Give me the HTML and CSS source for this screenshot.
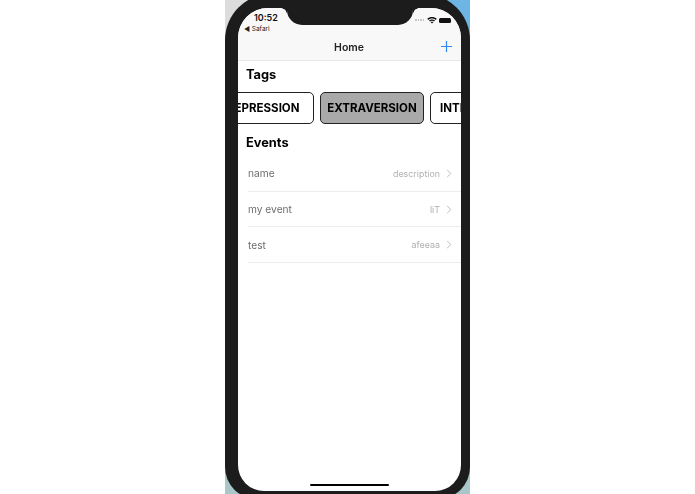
FILE: index.html
```html
<!DOCTYPE html>
<html lang="en">
<head>
<meta charset="utf-8">
<title>Home</title>
<link rel="stylesheet" href="styles.css">
</head>
<body>
<main class="stage">
  <div class="backdrop">
    <div class="phone">
      <div class="screen">
        <header class="top">
          <div class="status">
            <div class="status-left">
              <span class="time">10:52</span>
              <span class="back">◀ Safari</span>
            </div>
            <div class="status-right">
              <span class="dots"><i></i><i></i><i></i><i></i></span>
              <svg class="wifi" viewBox="0 0 12 9" width="10" height="8"><path d="M0.3 3.1C3.5 0 8.5 0 11.7 3.1L10.5 4.4C8 2 4 2 1.5 4.4Z M2.4 5.2C4.4 3.4 7.6 3.4 9.6 5.2L8.4 6.4C7 5.2 5 5.2 3.6 6.4Z M4.5 7.2C5.4 6.5 6.6 6.5 7.5 7.2L6 8.8Z" fill="#111"/></svg>
              <span class="battery"></span>
            </div>
          </div>
          <nav class="nav">
            <span class="nav-title">Home</span>
            <svg class="plus" viewBox="0 0 11 11" width="11" height="11"><path d="M5.5 0V11M0 5.5H11" stroke="#2f86ee" stroke-width="1.2" fill="none"/></svg>
          </nav>
        </header>
        <section class="content">
          <h2 class="heading tags-heading">Tags</h2>
          <div class="chips">
            <div class="chip chip-first">DEPRESSION</div>
            <div class="chip chip-active">EXTRAVERSION</div>
            <div class="chip chip-last">INTROVERSION</div>
          </div>
          <h2 class="heading events-heading">Events</h2>
          <ul class="events">
            <li class="event"><span class="event-name">name</span><span class="event-detail">description</span><svg class="chev" viewBox="0 0 6 10" width="6" height="9"><path d="M1 1L5 5L1 9" stroke="#b5b5b5" stroke-width="1" fill="none"/></svg></li>
            <li class="event"><span class="event-name">my event</span><span class="event-detail">liT</span><svg class="chev" viewBox="0 0 6 10" width="6" height="9"><path d="M1 1L5 5L1 9" stroke="#b5b5b5" stroke-width="1" fill="none"/></svg></li>
            <li class="event"><span class="event-name">test</span><span class="event-detail">afeeaa</span><svg class="chev" viewBox="0 0 6 10" width="6" height="9"><path d="M1 1L5 5L1 9" stroke="#b5b5b5" stroke-width="1" fill="none"/></svg></li>
          </ul>
        </section>
        <div class="home-bar"></div>
        <div class="notch"></div>
      </div>
    </div>
  </div>
</main>
</body>
</html>
```
FILE: styles.css
```css
* { box-sizing: border-box; }
html, body { margin: 0; padding: 0; background: #fff; }
body { font-family: Inter, "Liberation Sans", sans-serif; }
.stage { width: 695px; height: 494px; display: flex; justify-content: center; overflow: hidden; }
.backdrop {
  width: 245px; height: 494px; overflow: hidden;
  background: linear-gradient(90deg, #dcdcdc 0 50%, #6db5e2 50% 100%);
  position: relative;
}
.backdrop::after {
  content: ""; position: absolute; left: 0; right: 0; bottom: 0; height: 60px;
  background: #a9c6c8;
}
.phone {
  position: relative; z-index: 1;
  margin-top: -6px; height: 505px; padding: 14px 9px 8px 13px;
  background: #1c1c1c; border-radius: 46px 46px 32px 32px;
}
.screen {
  position: relative; height: 483px; background: #fff;
  border-radius: 30px 30px 26px 26px; overflow: hidden;
  filter: blur(0.35px);
}
.notch {
  position: absolute; left: 49px; top: 0; width: 126px; height: 17px;
  background: #1c1c1c; border-radius: 0 0 15px 15px;
}
.notch::before, .notch::after {
  content: ""; position: absolute; top: 0; width: 6px; height: 6px;
}
.notch::before { left: -6px; background: radial-gradient(circle at 0 100%, transparent 5.5px, #1c1c1c 6px); }
.notch::after { right: -6px; background: radial-gradient(circle at 100% 100%, transparent 5.5px, #1c1c1c 6px); }
.top { height: 53px; background: #f8f8f8; border-bottom: 1px solid #e6e6e6; display: flex; flex-direction: column; }
.status { height: 26px; display: flex; justify-content: space-between; padding: 4px 10px 0 6px; }
.status-left { display: flex; flex-direction: column; }
.time { font-size: 9px; font-weight: 600; line-height: 11px; color: #111; padding-left: 10px; }
.back { font-size: 6.5px; line-height: 9px; color: #222; margin-top: 2px; }
.status-right { display: flex; align-items: center; gap: 2px; height: 10px; margin-top: 3px; }
.dots { display: flex; gap: 1px; margin-right: 1px; }
.dots i { width: 1.5px; height: 1.5px; background: #bbb; border-radius: 50%; }
.battery { width: 12px; height: 5px; background: #111; border-radius: 1.5px; }
.nav { flex: 1; display: flex; align-items: center; justify-content: center; position: relative; }
.nav-title { font-size: 10.5px; font-weight: 600; color: #222; margin-right: 1px; margin-top: 1px; }
.plus { position: absolute; right: 9px; top: 50%; margin-top: -6px; }
.content { display: flex; flex-direction: column; }
.heading { margin: 0; font-size: 12.8px; font-weight: 700; color: #000; line-height: 16px; padding-left: 8px; }
.tags-heading { margin-top: 6px; }
.chips { display: flex; gap: 6px; margin-top: 9px; overflow: hidden; }
.chip {
  flex: none; height: 32px; border: 1.5px solid #222; border-radius: 5px; background: #fff;
  font-size: 11.5px; font-weight: 700; line-height: 31px; color: #000; white-space: nowrap;
}
.chip-first { width: 100px; margin-left: -24px; padding-right: 13.5px; text-align: right; }
.chip-active { width: 104px; background: #a9a9a9; text-align: center; }
.chip-last { width: 104px; padding-left: 9px; }
.events-heading { margin-top: 11px; }
.events { list-style: none; margin: 5px 0 0 10px; padding: 0; }
.event {
  height: 35.7px; display: flex; align-items: center; gap: 6px;
  border-bottom: 1px solid #ececec; padding-right: 9px;
}
.event-name { font-size: 10.2px; color: #6d6d6d; flex: 1; }
.event-detail { font-size: 8.9px; color: #b0b0b0; }
.home-bar {
  position: absolute; left: 72px; bottom: 5px; width: 79px; height: 2.5px;
  background: #000; border-radius: 2px;
}
```
